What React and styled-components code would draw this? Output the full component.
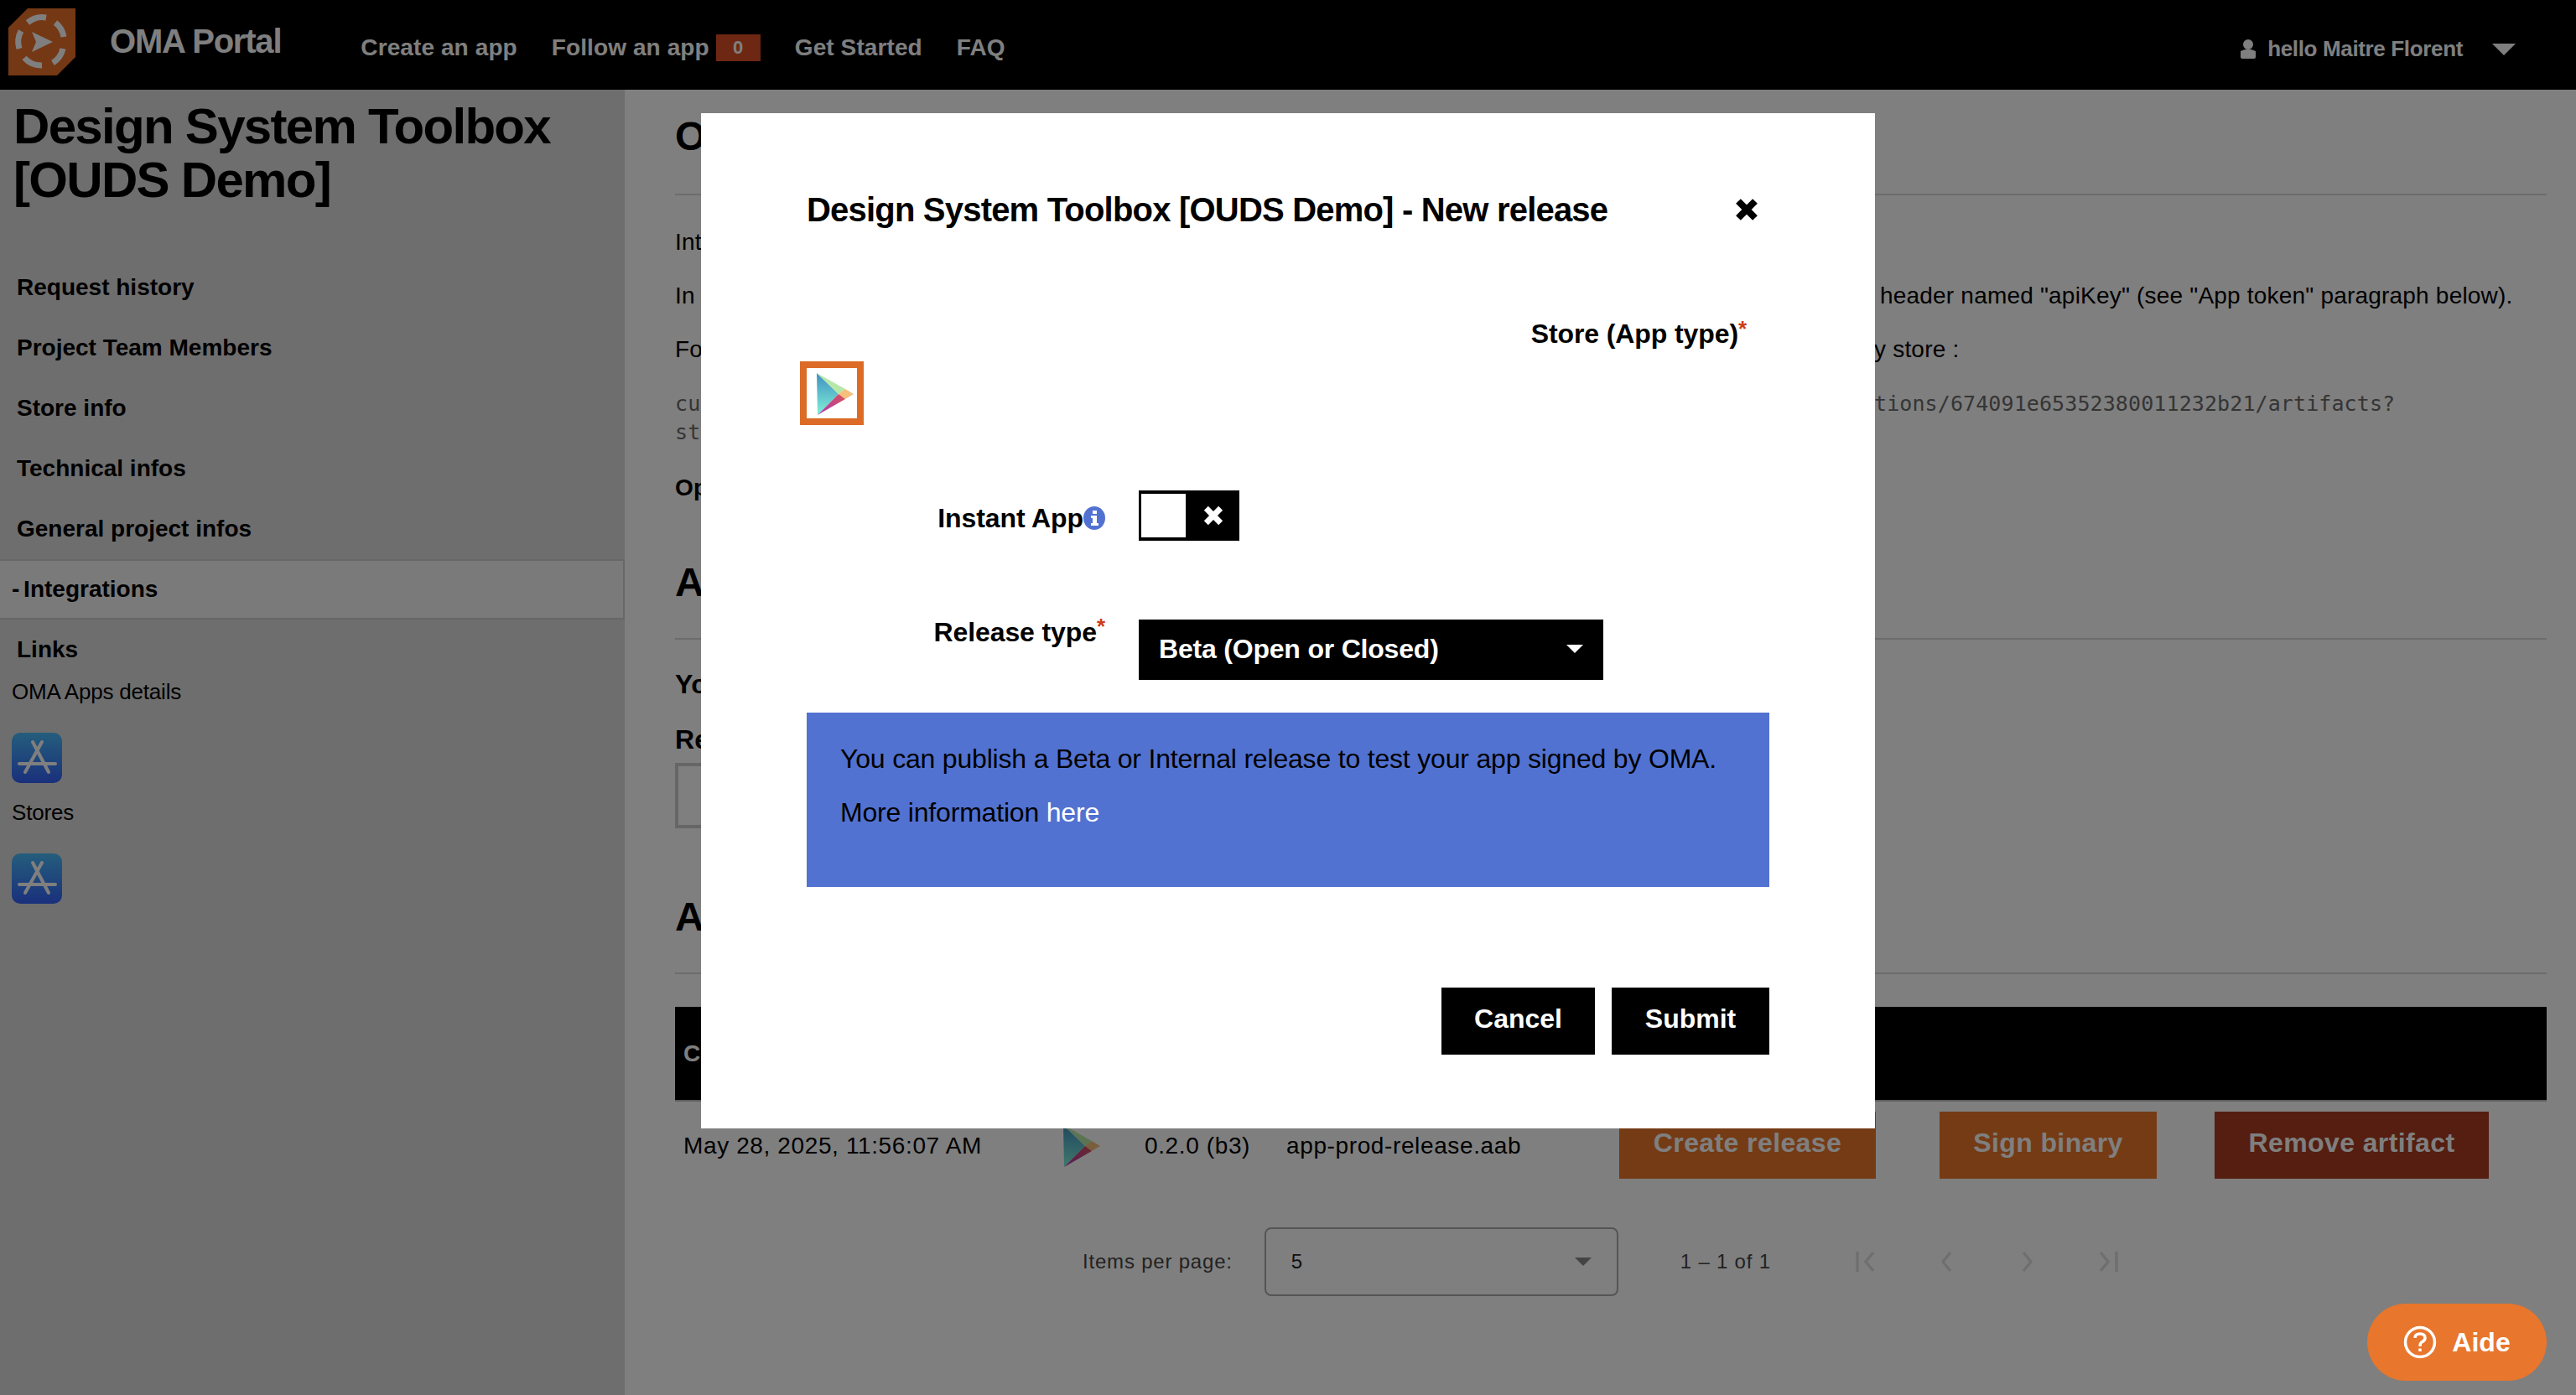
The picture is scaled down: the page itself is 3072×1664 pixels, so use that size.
import React from 'react';
import styled, { createGlobalStyle } from 'styled-components';
import { Fragment } from 'react';

const GlobalStyle = createGlobalStyle`
  html, body {
    margin: 0;
    padding: 0;
    width: 3072px;
    height: 1664px;
    overflow: hidden;
    background: #fff;
    font-family: "Liberation Sans", Arial, sans-serif;
    color: #000;
  }
  * { box-sizing: border-box; }
`;

const Page = styled.div`
  position: relative;
  width: 3072px;
  height: 1664px;
  overflow: hidden;
`;

const TopBar = styled.header`
  height: 107px;
  background: #000;
  display: flex;
  align-items: center;
  color: #fff;
  padding: 0 72px 0 10px;
`;

const Brand = styled.div`
  display: flex;
  align-items: center;
  gap: 41px;
  margin-right: 95px;
  font-size: 40px;
  font-weight: 700;
  letter-spacing: -1.2px;
  padding-bottom: 8px;
`;

const NavLinks = styled.nav`
  display: flex;
  align-items: center;
  gap: 41px;
  font-size: 28px;
  font-weight: 700;
  letter-spacing: 0.1px;
  padding-top: 6px;
`;

const NavLink = styled.a`
  display: flex;
  align-items: center;
  gap: 8px;
`;

const Badge = styled.span`
  width: 53px;
  height: 32px;
  background: #dc4e26;
  font-size: 22px;
  display: flex;
  align-items: center;
  justify-content: center;
`;

const UserMenu = styled.div`
  margin-left: auto;
  display: flex;
  align-items: center;
  font-size: 26px;
  font-weight: 700;
  letter-spacing: -0.35px;
  padding-top: 10px;
  & > span { margin: 0 35px 0 13px; }
`;

const Body = styled.div`
  display: flex;
  height: 1557px;
`;

const Sidebar = styled.aside`
  width: 745px;
  flex: none;
  background: #dcdcdc;
`;

const SideTitle = styled.h1`
  margin: 12px 0 0;
  padding-left: 16px;
  font-size: 60px;
  line-height: 64px;
  font-weight: 700;
  letter-spacing: -1.7px;
`;

const SideMenu = styled.div`
  margin-top: 60px;
  display: flex;
  flex-direction: column;
`;

const SideItem = styled.div`
  height: 72px;
  display: flex;
  align-items: center;
  padding-left: ${(p) => (p.$active ? 14 : 20)}px;
  font-size: 28px;
  font-weight: 700;
  white-space: pre;
  word-spacing: ${(p) => (p.$active ? -3 : 0)}px;
  background: ${(p) => (p.$active ? '#f4f4f4' : 'transparent')};
  ${(p) => p.$active && 'border: solid #cfcfcf; border-width: 2px 2px 2px 0;'}
`;

const SideCaption = styled.div`
  padding-left: 14px;
  margin-top: ${(p) => p.$top || 0}px;
  font-size: 26px;
  line-height: 32px;
  letter-spacing: -0.2px;
`;

const StoreLink = styled.div`
  padding-left: 14px;
  height: 60px;
  margin: 33px 0 19px;
`;

const Main = styled.main`
  flex: 1;
  background: #fff;
  padding: 28px 35px 0 60px;
  min-width: 0;
`;

const SectionTitle = styled.h2`
  margin: ${(p) => p.$top || 0}px 0 0;
  font-size: 48px;
  line-height: 56px;
  font-weight: 700;
  padding-bottom: ${(p) => p.$pad || 38}px;
  border-bottom: 2px solid #d8d8d8;
`;

const Para = styled.p`
  margin: ${(p) => p.$top}px 0 0;
  font-size: ${(p) => (p.$big ? 32 : 28)}px;
  line-height: 40px;
  letter-spacing: 0.2px;
  white-space: nowrap;
  font-weight: ${(p) => (p.$bold ? 700 : 400)};
`;

const Clipped = styled.span`
  display: inline-block;
  width: ${(p) => p.$w}px;
  overflow: hidden;
  vertical-align: top;
  white-space: pre;
`;

const CodeBlock = styled.pre`
  margin: 28px 0 -1px;
  font-family: "DejaVu Sans Mono", "Liberation Mono", monospace;
  font-size: 25px;
  letter-spacing: 0.1px;
  line-height: 34px;
  color: #6a6a6a;
`;

const EmptyInput = styled.div`
  margin-top: 8px;
  width: 900px;
  height: 78px;
  border: 4px solid #ccc;
`;

const TableHead = styled.div`
  margin-top: 39px;
  height: 113px;
  background: #000;
  border-bottom: 2px solid #bbb;
  color: #fff;
  font-size: 28px;
  font-weight: 700;
  display: flex;
  align-items: center;
  padding: 0 10px;
`;

const TableRow = styled.div`
  margin-top: 12px;
  display: grid;
  grid-template-columns: 451px 109px 169px 397px 382px 328px 1fr;
  align-items: center;
  font-size: 28px;
  letter-spacing: 0.62px;
  & > span { padding-top: 2px; }
  & > span:first-child { padding-left: 10px; }
`;

const RowButton = styled.button`
  border: 0;
  padding: 0 0 6px;
  height: 80px;
  width: ${(p) => p.$w}px;
  background: ${(p) => (p.$danger ? '#aa3c20' : '#ea762a')};
  color: #fff;
  font-family: inherit;
  font-size: 32px;
  font-weight: 700;
  letter-spacing: 0.4px;
`;

const Paginator = styled.div`
  margin-top: 58px;
  display: flex;
  align-items: center;
  padding-left: 486px;
  font-size: 24px;
  letter-spacing: 0.8px;
  color: #444;
`;

const PageSize = styled.div`
  width: 422px;
  height: 82px;
  margin: 0 74px 0 38px;
  border: 2px solid #aaa;
  border-radius: 8px;
  display: flex;
  align-items: center;
  justify-content: space-between;
  padding: 0 30px;
  color: #222;
`;

const Caret = styled.i`
  display: block;
  width: 0;
  height: 0;
  border-left: ${(p) => p.$w || 10}px solid transparent;
  border-right: ${(p) => p.$w || 10}px solid transparent;
  border-top: ${(p) => p.$w || 10}px solid ${(p) => p.$color || '#888'};
`;

const PagerIcons = styled.div`
  margin-left: 99px;
  display: flex;
  align-items: center;
  gap: 71px;
`;

const Backdrop = styled.div`
  position: absolute;
  inset: 0;
  background: rgba(0, 0, 0, 0.5);
`;

const Modal = styled.div`
  position: absolute;
  top: 135px;
  left: 836px;
  width: 1400px;
  height: 1211px;
  background: #fff;
  padding: 91px 126px 0;
`;

const ModalHead = styled.div`
  display: flex;
  align-items: center;
  justify-content: space-between;
  padding-right: 12px;
  h3 {
    margin: 0;
    font-size: 40px;
    line-height: 48px;
    font-weight: 700;
    letter-spacing: -0.8px;
  }
`;

const Required = styled.span`
  color: #cd3c14;
  font-size: 26px;
  line-height: 26px;
  font-weight: 700;
  align-self: flex-start;
  vertical-align: 8px;
`;

const StoreLabel = styled.div`
  margin-top: 104px;
  margin-bottom: 13px;
  padding-right: 27px;
  text-align: right;
  font-size: 32px;
  line-height: 40px;
  font-weight: 700;
  letter-spacing: -0.1px;
`;

const StoreChoice = styled.div`
  margin-left: -8px;
  width: 76px;
  height: 76px;
  border: 8px solid #dc6b27;
`;

const FormRow = styled.div`
  margin-top: ${(p) => p.$top}px;
  display: flex;
  align-items: ${(p) => (p.$start ? 'flex-start' : 'center')};
  gap: 40px;
`;

const FieldLabel = styled.label`
  width: 356px;
  flex: none;
  display: flex;
  justify-content: flex-end;
  align-items: center;
  font-size: 32px;
  line-height: 40px;
  font-weight: 700;
  letter-spacing: -0.1px;
  margin-top: ${(p) => p.$shift || 0}px;
`;

const Toggle = styled.div`
  width: 120px;
  height: 60px;
  background: #000;
  padding: 4px 0 4px 3px;
  display: flex;
  align-items: center;
  & > b {
    display: block;
    width: 53px;
    height: 52px;
    background: #fff;
  }
  & > svg { margin-left: 20px; }
`;

const SelectBox = styled.div`
  width: 554px;
  height: 72px;
  background: #000;
  color: #fff;
  font-size: 32px;
  font-weight: 700;
  letter-spacing: -0.2px;
  display: flex;
  align-items: center;
  justify-content: space-between;
  padding: 0 24px 2px;
`;

const InfoBox = styled.div`
  margin-top: 39px;
  height: 208px;
  background: #5272d1;
  padding: 23px 40px 0;
  font-size: 32px;
  line-height: 64px;
  letter-spacing: -0.19px;
  a { color: #fff; }
`;

const ModalActions = styled.div`
  margin-top: 120px;
  display: flex;
  justify-content: flex-end;
  gap: 20px;
`;

const ModalButton = styled.button`
  width: ${(p) => p.$w}px;
  height: 80px;
  border: 0;
  padding: 0 0 6px;
  background: #000;
  color: #fff;
  font-family: inherit;
  font-size: 32px;
  font-weight: 700;
`;

const HelpButton = styled.button`
  position: absolute;
  left: 2823px;
  top: 1555px;
  width: 214px;
  height: 92px;
  border: 0;
  border-radius: 46px;
  background: #e8762c;
  color: #fff;
  font-family: inherit;
  font-size: 32px;
  font-weight: 700;
  display: flex;
  align-items: center;
  justify-content: center;
  gap: 18px;
`;

const Logo = () => (
  <svg width="80" height="80" viewBox="0 0 80 80">
    <polygon points="0,23 23,0 80,0 80,58 58,80 0,80" fill="#ea702a" />
    <g fill="none" stroke="#fff" strokeWidth="7">
      <path d="M23 17 A27 27 0 0 1 45 11" />
      <path d="M56 17 A27 27 0 0 1 66 34" />
      <path d="M65 48 A27 27 0 0 1 53 65" />
      <path d="M40 68 A27 27 0 0 1 19 59" />
      <path d="M13 48 A27 27 0 0 1 15 27" />
    </g>
    <path d="M28 28 L53 40 L28 52 L33 40 Z" fill="#fff" />
  </svg>
);

const PlayStore = () => (
  <svg width="60" height="60" viewBox="0 0 60 60">
    <defs>
      <linearGradient id="playBlue" x1="0" y1="0" x2="0" y2="1">
        <stop offset="0" stopColor="#3f8fc2" />
        <stop offset="1" stopColor="#80f2d6" />
      </linearGradient>
      <linearGradient id="playRed" x1="1" y1="0" x2="0" y2="1">
        <stop offset="0" stopColor="#d9505a" />
        <stop offset="1" stopColor="#a83fb8" />
      </linearGradient>
    </defs>
    <polygon points="12,6 38,31 13,56" fill="url(#playBlue)" />
    <polygon points="12,6 46,25 38,31" fill="#b6e8a9" />
    <polygon points="46,25 56,31 46,37 38,31" fill="#f5bf7c" />
    <polygon points="38,31 46,37 13,56" fill="url(#playRed)" />
  </svg>
);

const AppStore = () => (
  <svg width="60" height="60" viewBox="0 0 60 60">
    <defs>
      <linearGradient id="appBlue" x1="0" y1="0" x2="0" y2="1">
        <stop offset="0" stopColor="#4abcf8" />
        <stop offset="1" stopColor="#3460f8" />
      </linearGradient>
    </defs>
    <rect width="60" height="60" rx="10" fill="url(#appBlue)" />
    <g stroke="#fff" strokeWidth="4" fill="none" strokeLinecap="round">
      <path d="M25 11 L44 47" />
      <path d="M36 11 L16 47" />
      <path d="M9 37 L52 37" />
    </g>
  </svg>
);

const Cross = ({ size, color }) => (
  <svg width={size} height={size} viewBox="0 0 24 24">
    <path d="M4 4 L20 20 M20 4 L4 20" stroke={color} strokeWidth="6.5" />
  </svg>
);

const InfoIcon = () => (
  <svg width="26" height="28" viewBox="0 0 26 28">
    <ellipse cx="13" cy="14" rx="13" ry="14" fill="#5272d1" />
    <rect x="11" y="5" width="5" height="4" fill="#fff" />
    <path d="M9 11 H16 V20 H18 V23 H9 V20 H11 V14 H9 Z" fill="#fff" />
  </svg>
);

const UserIcon = () => (
  <svg width="20" height="24" viewBox="0 0 20 24">
    <ellipse cx="10" cy="6" rx="6" ry="6" fill="#fff" />
    <path d="M1 14 Q10 9 19 14 V21 Q19 23 17 23 H3 Q1 23 1 21 Z" fill="#fff" />
  </svg>
);

const PagerIcon = ({ d, bar }) => (
  <svg width="26" height="26" viewBox="0 0 26 26" fill="none" stroke="#dedede" strokeWidth="3.5">
    <path d={d} />
    {bar && <path d={bar} />}
  </svg>
);

const HelpIcon = () => (
  <svg width="40" height="40" viewBox="0 0 40 40" fill="none" stroke="#fff">
    <circle cx="20" cy="20" r="17.5" strokeWidth="3.5" />
    <path d="M14 15 Q14 10 20 10 Q26 10 26 15 Q26 18 22 20 Q20 21 20 25" strokeWidth="3.5" />
    <path d="M20 27.5 V31" strokeWidth="3.5" />
  </svg>
);

const sideItems = ['Request history', 'Project Team Members', 'Store info', 'Technical infos', 'General project infos'];

const App = () => {
  return (
    <Fragment>
      <GlobalStyle />
      <Page>
        <TopBar>
          <Brand>
            <Logo />
            OMA Portal
          </Brand>
          <NavLinks>
            <NavLink>Create an app</NavLink>
            <NavLink>
              Follow an app
              <Badge>0</Badge>
            </NavLink>
            <NavLink>Get Started</NavLink>
            <NavLink>FAQ</NavLink>
          </NavLinks>
          <UserMenu>
            <UserIcon />
            <span>hello Maitre Florent</span>
            <Caret $w={14} $color="#fff" />
          </UserMenu>
        </TopBar>
        <Body>
          <Sidebar>
            <SideTitle>
              Design System Toolbox
              <br />
              [OUDS Demo]
            </SideTitle>
            <SideMenu>
              {sideItems.map((item) => (
                <SideItem key={item}>{item}</SideItem>
              ))}
              <SideItem $active>- Integrations</SideItem>
              <SideItem>Links</SideItem>
            </SideMenu>
            <SideCaption $top={-2}>OMA Apps details</SideCaption>
            <StoreLink>
              <AppStore />
            </StoreLink>
            <SideCaption>Stores</SideCaption>
            <StoreLink>
              <AppStore />
            </StoreLink>
          </Sidebar>
          <Main>
            <SectionTitle $pad={40}>OMA API</SectionTitle>
            <Para $top={36}>Integrations are available for your project.</Para>
            <Para $top={24}>
              <Clipped $w={1437}>In order to use the API, every request has to be sent with your application token in a</Clipped>
              header named "apiKey" (see "App token" paragraph below).
            </Para>
            <Para $top={24}>
              <Clipped $w={1430}>For example, you can list the artifacts of your application that are published to any</Clipped>
              y store :
            </Para>
            <CodeBlock>
              <Clipped $w={1430}>curl -H "apiKey: $API_KEY" https://oma-portal.example.com/api/v1/applica</Clipped>
              tions/674091e65352380011232b21/artifacts?
              {'\n'}
              store=google
            </CodeBlock>
            <Para $top={30} $bold>OpenAPI documentation</Para>
            <SectionTitle $top={65}>App token</SectionTitle>
            <Para $top={33} $bold $big>You can generate a token</Para>
            <Para $top={26} $bold $big>Read token</Para>
            <EmptyInput />
            <SectionTitle $top={78}>Artifacts</SectionTitle>
            <TableHead>Creation date</TableHead>
            <TableRow>
              <span>May 28, 2025, 11:56:07 AM</span>
              <PlayStore />
              <span>0.2.0 (b3)</span>
              <span>app-prod-release.aab</span>
              <RowButton $w={306}>Create release</RowButton>
              <RowButton $w={259}>Sign binary</RowButton>
              <RowButton $w={327} $danger>Remove artifact</RowButton>
            </TableRow>
            <Paginator>
              Items per page:
              <PageSize>
                5
                <Caret />
              </PageSize>
              1 – 1 of 1
              <PagerIcons>
                <PagerIcon d="M23 2 L14 13 L23 24" bar="M4 1 V25" />
                <PagerIcon d="M18 2 L9 13 L18 24" />
                <PagerIcon d="M8 2 L17 13 L8 24" />
                <PagerIcon d="M3 2 L12 13 L3 24" bar="M22 1 V25" />
              </PagerIcons>
            </Paginator>
          </Main>
        </Body>
        <Backdrop />
        <Modal>
          <ModalHead>
            <h3>Design System Toolbox [OUDS Demo] - New release</h3>
            <Cross size={30} color="#000" />
          </ModalHead>
          <StoreLabel>
            Store (App type)<Required>*</Required>
          </StoreLabel>
          <StoreChoice>
            <PlayStore />
          </StoreChoice>
          <FormRow $top={78}>
            <FieldLabel $shift={6}>
              Instant App
              <InfoIcon />
            </FieldLabel>
            <Toggle>
              <b />
              <Cross size={26} color="#fff" />
            </Toggle>
          </FormRow>
          <FormRow $top={94} $start>
            <FieldLabel $shift={-5}>
              Release type<Required>*</Required>
            </FieldLabel>
            <SelectBox>
              Beta (Open or Closed)
              <Caret $color="#fff" />
            </SelectBox>
          </FormRow>
          <InfoBox>
            You can publish a Beta or Internal release to test your app signed by OMA.
            <br />
            More information <a>here</a>
          </InfoBox>
          <ModalActions>
            <ModalButton $w={183}>Cancel</ModalButton>
            <ModalButton $w={188}>Submit</ModalButton>
          </ModalActions>
        </Modal>
        <HelpButton>
          <HelpIcon />
          Aide
        </HelpButton>
      </Page>
    </Fragment>
  );
};

export default App;
